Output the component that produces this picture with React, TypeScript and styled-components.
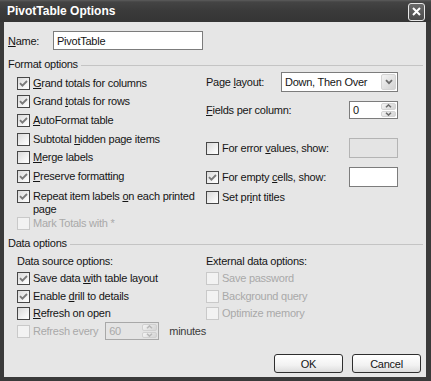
import * as React from 'react';
import styled, { createGlobalStyle } from 'styled-components';

const GlobalStyle = createGlobalStyle`
  html, body {
    margin: 0;
    padding: 0;
    background: #ffffff;
  }
  body {
    font-family: "Liberation Sans", Arial, sans-serif;
    font-size: 11px;
    letter-spacing: -0.25px;
    color: #151515;
  }
`;

const Window = styled.div`
  width: 431px;
  height: 381px;
  box-sizing: border-box;
  display: flex;
  flex-direction: column;
  background: #3a3a3a;
`;

const TitleBar = styled.div`
  height: 22px;
  flex: none;
  display: flex;
  align-items: center;
  justify-content: space-between;
  padding: 0 6px 0 7px;
  background: linear-gradient(#5c5c5c 0px, #444 2px, #3a3a3a 50%, #353535 100%);
`;

const Title = styled.span`
  color: #fff;
  font-size: 12px;
  font-weight: bold;
  letter-spacing: 0;
`;

const CloseButton = styled.div`
  width: 15px;
  height: 16px;
  border: 1px solid #e8e8e8;
  border-radius: 3px;
  background: linear-gradient(#6a6a6a, #4a4a4a);
  display: flex;
  align-items: center;
  justify-content: center;
  margin-top: 1px;
`;

const Body = styled.div`
  flex: 1;
  margin: 0 5px 4px 4px;
  background: #e6e6e6;
  padding: 9px 3px 4px 4px;
  display: flex;
  flex-direction: column;
`;

const NameRow = styled.div`
  display: flex;
  align-items: center;
  height: 19px;
`;

const NameLabel = styled.span`
  width: 45px;
`;

const TextBox = styled.div<{ $width: number; $height: number; $disabled?: boolean }>`
  box-sizing: border-box;
  width: ${(p) => p.$width}px;
  height: ${(p) => p.$height}px;
  border: 1px solid ${(p) => (p.$disabled ? '#b4b4b4' : '#7c7c7c')};
  background: ${(p) => (p.$disabled ? '#e4e4e4' : '#fff')};
  display: flex;
  align-items: center;
  padding-left: 3px;
  flex: none;
`;

const GroupHeader = styled.div<{ $top: number }>`
  display: flex;
  align-items: center;
  gap: 3px;
  height: 14px;
  margin-top: ${(p) => p.$top}px;
  &::after {
    content: '';
    flex: 1;
    border-top: 1px solid #c4c4c4;
    margin-top: 3px;
  }
`;

const Columns = styled.div<{ $top: number }>`
  display: grid;
  grid-template-columns: 189px 192px;
  padding-left: 9px;
  margin-top: ${(p) => p.$top}px;
`;

const Column = styled.div<{ $pad?: number }>`
  display: flex;
  flex-direction: column;
  padding-top: ${(p) => p.$pad || 0}px;
`;

const CheckRow = styled.div<{ $h: number; $top?: number; $multi?: boolean }>`
  display: flex;
  align-items: ${(p) => (p.$multi ? 'flex-start' : 'center')};
  gap: 3px;
  height: ${(p) => p.$h}px;
  margin-top: ${(p) => p.$top || 0}px;
  box-sizing: border-box;
  padding-top: ${(p) => (p.$multi ? 4.5 : 0)}px;
  line-height: 13px;
`;

const Label = styled.span<{ $disabled?: boolean }>`
  color: ${(p) => (p.$disabled ? '#a9a9a9' : '#151515')};
  white-space: nowrap;
`;

const FieldRow = styled.div<{ $h: number; $top?: number }>`
  display: flex;
  align-items: center;
  justify-content: space-between;
  height: ${(p) => p.$h}px;
  margin-top: ${(p) => p.$top || 0}px;
`;

const LeftPair = styled.div`
  display: flex;
  align-items: center;
  gap: 3px;
`;

const Box = styled.span<{ $disabled?: boolean }>`
  box-sizing: border-box;
  width: 13px;
  height: 13px;
  flex: none;
  border: 1px solid ${(p) => (p.$disabled ? '#c9c9c9' : '#474747')};
  background: ${(p) =>
    p.$disabled ? '#f2f2f2' : 'linear-gradient(135deg, #d9d9d9, #f6f6f6 70%, #ffffff)'};
  display: flex;
  align-items: center;
  justify-content: center;
`;

const SubHeading = styled.div`
  display: grid;
  grid-template-columns: 189px 192px;
  padding-left: 9px;
  height: 14px;
  align-items: center;
  margin-top: 4px;
`;

const Select = styled.div`
  box-sizing: border-box;
  width: 117px;
  height: 20px;
  border: 1px solid #7c7c7c;
  background: #fff;
  display: flex;
  align-items: center;
  justify-content: space-between;
  padding: 1px 1px 1px 3px;
`;

const DropButton = styled.div`
  width: 15px;
  height: 16px;
  border-radius: 2px;
  border: 1px solid #d4d4d4;
  box-sizing: border-box;
  background: linear-gradient(135deg, #f4f4f4, #d2d2d2);
  display: flex;
  align-items: center;
  justify-content: center;
`;

const Spin = styled.div<{ $width: number; $height: number; $disabled?: boolean }>`
  box-sizing: border-box;
  width: ${(p) => p.$width}px;
  height: ${(p) => p.$height}px;
  border: 1px solid ${(p) => (p.$disabled ? '#a8a8a8' : '#7c7c7c')};
  background: ${(p) => (p.$disabled ? '#e4e4e4' : '#fff')};
  color: ${(p) => (p.$disabled ? '#a9a9a9' : '#151515')};
  display: flex;
  align-items: center;
  justify-content: space-between;
  padding: 1px 1px 1px 3px;
  flex: none;
`;

const SpinButtons = styled.div<{ $disabled?: boolean }>`
  width: 15px;
  height: 100%;
  display: flex;
  flex-direction: column;
  gap: 1px;
  > div {
    flex: 1;
    border: 1px solid ${(p) => (p.$disabled ? '#d0d0d0' : '#d4d4d4')};
    border-radius: 2px;
    background: linear-gradient(135deg, #f4f4f4, #d4d4d4);
    display: flex;
    align-items: center;
    justify-content: center;
  }
`;

const RefreshRow = styled.div`
  display: flex;
  align-items: center;
  height: 17.4px;
`;

const Buttons = styled.div`
  margin-top: auto;
  display: flex;
  justify-content: flex-end;
  gap: 9px;
  padding-right: 2px;
`;

const Button = styled.button`
  box-sizing: border-box;
  width: 69px;
  height: 19px;
  border: 1px solid #2e2e2e;
  border-radius: 3px;
  background: linear-gradient(#ffffff, #f2f2f2 60%, #dcdcdc);
  font-family: inherit;
  font-size: 11px;
  letter-spacing: -0.25px;
  color: #151515;
  padding: 0;
`;

const U = styled.span`
  text-decoration: underline;
`;

const Check = ({ checked, disabled }: { checked?: boolean; disabled?: boolean }) => (
  <Box $disabled={disabled}>
    {checked && (
      <svg width="9" height="9" viewBox="0 0 9 9">
        <path d="M1 4.2 L3.4 6.6 L8 2" fill="none" stroke="#7a7a7a" strokeWidth="1.9" />
      </svg>
    )}
  </Box>
);

const Chevron = ({ color = '#6c6c6c' }: { color?: string }) => (
  <svg width="8" height="6" viewBox="0 0 8 6">
    <path d="M1 1.2 L4 4.2 L7 1.2" fill="none" stroke={color} strokeWidth="1.8" />
  </svg>
);

const SpinArrows = ({ disabled }: { disabled?: boolean }) => {
  const c = disabled ? '#b8b8b8' : '#6c6c6c';
  return (
    <SpinButtons $disabled={disabled}>
      <div>
        <svg width="7" height="4" viewBox="0 0 7 4">
          <path d="M1 3.3 L3.5 0.9 L6 3.3" fill="none" stroke={c} strokeWidth="1.5" />
        </svg>
      </div>
      <div>
        <svg width="7" height="4" viewBox="0 0 7 4">
          <path d="M1 0.7 L3.5 3.1 L6 0.7" fill="none" stroke={c} strokeWidth="1.5" />
        </svg>
      </div>
    </SpinButtons>
  );
};

export default function App() {
  return (
    <>
      <GlobalStyle />
      <Window>
        <TitleBar>
          <Title>PivotTable Options</Title>
          <CloseButton>
            <svg width="9" height="9" viewBox="0 0 9 9">
              <path d="M1 1 L8 8 M8 1 L1 8" stroke="#fff" strokeWidth="2" />
            </svg>
          </CloseButton>
        </TitleBar>
        <Body>
          <NameRow>
            <NameLabel>
              <U>N</U>ame:
            </NameLabel>
            <TextBox $width={150} $height={19}>PivotTable</TextBox>
          </NameRow>

          <GroupHeader $top={7}>Format options</GroupHeader>
          <Columns $top={1}>
            <Column $pad={1.7}>
              <CheckRow $h={18.7}>
                <Check checked />
                <Label><U>G</U>rand totals for columns</Label>
              </CheckRow>
              <CheckRow $h={18.7}>
                <Check checked />
                <Label>Grand <U>t</U>otals for rows</Label>
              </CheckRow>
              <CheckRow $h={18.7}>
                <Check checked />
                <Label><U>A</U>utoFormat table</Label>
              </CheckRow>
              <CheckRow $h={18.7}>
                <Check />
                <Label>Subtotal <U>h</U>idden page items</Label>
              </CheckRow>
              <CheckRow $h={18.7}>
                <Check />
                <Label><U>M</U>erge labels</Label>
              </CheckRow>
              <CheckRow $h={18.7}>
                <Check checked />
                <Label><U>P</U>reserve formatting</Label>
              </CheckRow>
              <CheckRow $h={28.8} $multi>
                <Check checked />
                <Label>
                  Repeat item labels <U>o</U>n each printed
                  <br />
                  page
                </Label>
              </CheckRow>
              <CheckRow $h={18.7}>
                <Check disabled />
                <Label $disabled>Mark Totals with *</Label>
              </CheckRow>
            </Column>
            <Column>
              <FieldRow $h={20}>
                <Label>Page <U>l</U>ayout:</Label>
                <Select>
                  <span>Down, Then Over</span>
                  <DropButton>
                    <Chevron />
                  </DropButton>
                </Select>
              </FieldRow>
              <FieldRow $h={18} $top={9}>
                <Label><U>F</U>ields per column:</Label>
                <Spin $width={49} $height={18}>
                  <span>0</span>
                  <SpinArrows />
                </Spin>
              </FieldRow>
              <FieldRow $h={20} $top={19}>
                <LeftPair>
                  <Check />
                  <Label>For error <U>v</U>alues, show:</Label>
                </LeftPair>
                <TextBox $width={49} $height={20} $disabled />
              </FieldRow>
              <FieldRow $h={20} $top={9}>
                <LeftPair>
                  <Check checked />
                  <Label>For empty <U>c</U>ells, show:</Label>
                </LeftPair>
                <TextBox $width={49} $height={20} />
              </FieldRow>
              <FieldRow $h={14} $top={3}>
                <LeftPair>
                  <Check />
                  <Label>Set pr<U>i</U>nt titles</Label>
                </LeftPair>
              </FieldRow>
            </Column>
          </Columns>

          <GroupHeader $top={2.6}>Data options</GroupHeader>
          <SubHeading>
            <Label>Data source options:</Label>
            <Label>External data options:</Label>
          </SubHeading>
          <Columns $top={2.3}>
            <Column>
              <CheckRow $h={17.4}>
                <Check checked />
                <Label>Save data <U>w</U>ith table layout</Label>
              </CheckRow>
              <CheckRow $h={17.4}>
                <Check checked />
                <Label>Enable <U>d</U>rill to details</Label>
              </CheckRow>
              <CheckRow $h={17.4}>
                <Check />
                <Label><U>R</U>efresh on open</Label>
              </CheckRow>
              <RefreshRow>
                <Check disabled />
                <Label $disabled style={{ width: 78, marginLeft: 3 }}>Refresh every</Label>
                <Spin $width={54} $height={18} $disabled>
                  <span>60</span>
                  <SpinArrows disabled />
                </Spin>
                <Label style={{ marginLeft: 10, color: '#3a3a3a' }}>minutes</Label>
              </RefreshRow>
            </Column>
            <Column>
              <CheckRow $h={17.4}>
                <Check disabled />
                <Label $disabled>Save password</Label>
              </CheckRow>
              <CheckRow $h={17.4}>
                <Check disabled />
                <Label $disabled>Background query</Label>
              </CheckRow>
              <CheckRow $h={17.4}>
                <Check disabled />
                <Label $disabled>Optimize memory</Label>
              </CheckRow>
            </Column>
          </Columns>

          <Buttons>
            <Button>OK</Button>
            <Button>Cancel</Button>
          </Buttons>
        </Body>
      </Window>
    </>
  );
}
